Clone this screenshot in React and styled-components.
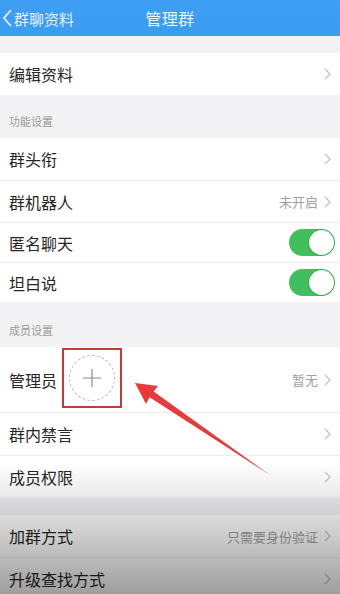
import React from "react";
import styled, { createGlobalStyle } from "styled-components";

const GlobalStyle = createGlobalStyle`
    html, body {
        margin: 0;
        padding: 0;
        background: #f2f2f4;
    }
    body {
        font-family: "Noto Sans CJK SC", "Noto Sans", sans-serif;
    }
`;

const Page = styled.div`
    position: relative;
    width: 340px;
    height: 594px;
    overflow: hidden;
    background: #f2f2f4;
`;

const Header = styled.div`
    height: 36px;
    display: grid;
    grid-template-columns: 1fr auto 1fr;
    align-items: center;
    background: linear-gradient(#3e9ff4, #3a9cf2);
    color: #fff;
`;

const Back = styled.div`
    display: flex;
    align-items: center;
    gap: 1px;
    font-size: 15px;
    color: #e6f2fd;
    padding-left: 2px;
`;

const Title = styled.div`
    font-size: 16px;
    color: #eef6fe;
    letter-spacing: 0.5px;
`;

const Gap = styled.div`
    height: ${(p) => p.h}px;
`;

const Section = styled.div`
    height: ${(p) => p.h}px;
    display: flex;
    align-items: flex-end;
    padding: 0 0 ${(p) => p.pb}px 9px;
    box-sizing: border-box;
    font-size: 11px;
    color: #9a9a9a;
`;

const Row = styled.div`
    height: ${(p) => p.h || 42}px;
    display: flex;
    align-items: center;
    padding: 0 9px;
    box-sizing: border-box;
    background: #fff;
    border-top: ${(p) => (p.first ? "none" : "1px solid #ececec")};
`;

const Label = styled.div`
    font-size: 16px;
    color: #262626;
`;

const Right = styled.div`
    margin-left: auto;
    display: flex;
    align-items: center;
    gap: 6px;
    font-size: 13px;
    color: #a0a0a0;
`;

const Marker = styled.div`
    margin-left: 5px;
    width: 60px;
    height: 60px;
    box-sizing: border-box;
    border: 2px solid #c7383b;
    display: flex;
    align-items: center;
    justify-content: center;
    margin-top: -4px;
`;

const AddCircle = styled.div`
    width: 44px;
    height: 44px;
    border-radius: 50%;
    border: 1px dashed #b9b9b9;
    display: flex;
    align-items: center;
    justify-content: center;
`;

const Toggle = styled.div`
    margin-left: auto;
    margin-right: -4px;
    width: 46px;
    height: 27px;
    border-radius: 14px;
    background: #3fbf5d;
    position: relative;
    &::after {
        content: "";
        position: absolute;
        right: 1px;
        top: 1px;
        width: 25px;
        height: 25px;
        border-radius: 50%;
        background: #fff;
        box-shadow: 0 0 0 1px rgba(0, 0, 0, 0.12);
    }
`;

const Shade = styled.div`
    position: absolute;
    left: 0;
    right: 0;
    bottom: 0;
    height: 130px;
    pointer-events: none;
    background: linear-gradient(rgba(0, 0, 0, 0), rgba(0, 0, 0, 0.14) 40%, rgba(0, 0, 0, 0.38));
`;

const ArrowLayer = styled.svg`
    position: absolute;
    left: 0;
    top: 0;
    pointer-events: none;
`;

const Chevron = ({ color = "#c4c4c4", w = 7, h = 12 }) => (
    <svg width={w} height={h} viewBox="0 0 7 12">
        <path d="M1 1 L6 6 L1 11" fill="none" stroke={color} strokeWidth="1.3" />
    </svg>
);

const NavRow = ({ label, value, h, first }) => (
    <Row h={h} first={first}>
        <Label>{label}</Label>
        <Right>
            {value}
            <Chevron />
        </Right>
    </Row>
);

const App = () => {
    return (
        <Page>
            <GlobalStyle />
            <Header>
                <Back>
                    <svg width="11" height="20" viewBox="0 0 11 20">
                        <path d="M9 2 L2 10 L9 18" fill="none" stroke="#e6f2fd" strokeWidth="1.8" />
                    </svg>
                    群聊资料
                </Back>
                <Title>管理群</Title>
                <div />
            </Header>
            <Gap h={17} />
            <NavRow label="编辑资料" first h={42} />
            <Section h={43} pb={9}>功能设置</Section>
            <NavRow label="群头衔" first h={42} />
            <NavRow label="群机器人" value="未开启" h={42} />
            <Row h={40}>
                <Label>匿名聊天</Label>
                <Toggle />
            </Row>
            <Row h={40}>
                <Label>坦白说</Label>
                <Toggle />
            </Row>
            <Section h={45} pb={9}>成员设置</Section>
            <Row h={65} first>
                <Label>管理员</Label>
                <Marker>
                    <AddCircle>
                        <svg width="18" height="18" viewBox="0 0 18 18">
                            <path d="M9 0 V18 M0 9 H18" stroke="#8a8a8a" strokeWidth="1.2" />
                        </svg>
                    </AddCircle>
                </Marker>
                <Right>
                    暂无
                    <Chevron />
                </Right>
            </Row>
            <NavRow label="群内禁言" h={43} />
            <NavRow label="成员权限" h={42} />
            <Gap h={18} />
            <NavRow label="加群方式" value="只需要身份验证" first h={42} />
            <NavRow label="升级查找方式" h={42} />
            <ArrowLayer width="340" height="594" viewBox="0 0 340 594">
                <polygon
                    points="135,383 158,386 153.6,391.4 270,475 149.6,397.2 146,404"
                    fill="#e8393b"
                />
            </ArrowLayer>
            <Shade />
        </Page>
    );
};

export default App;
